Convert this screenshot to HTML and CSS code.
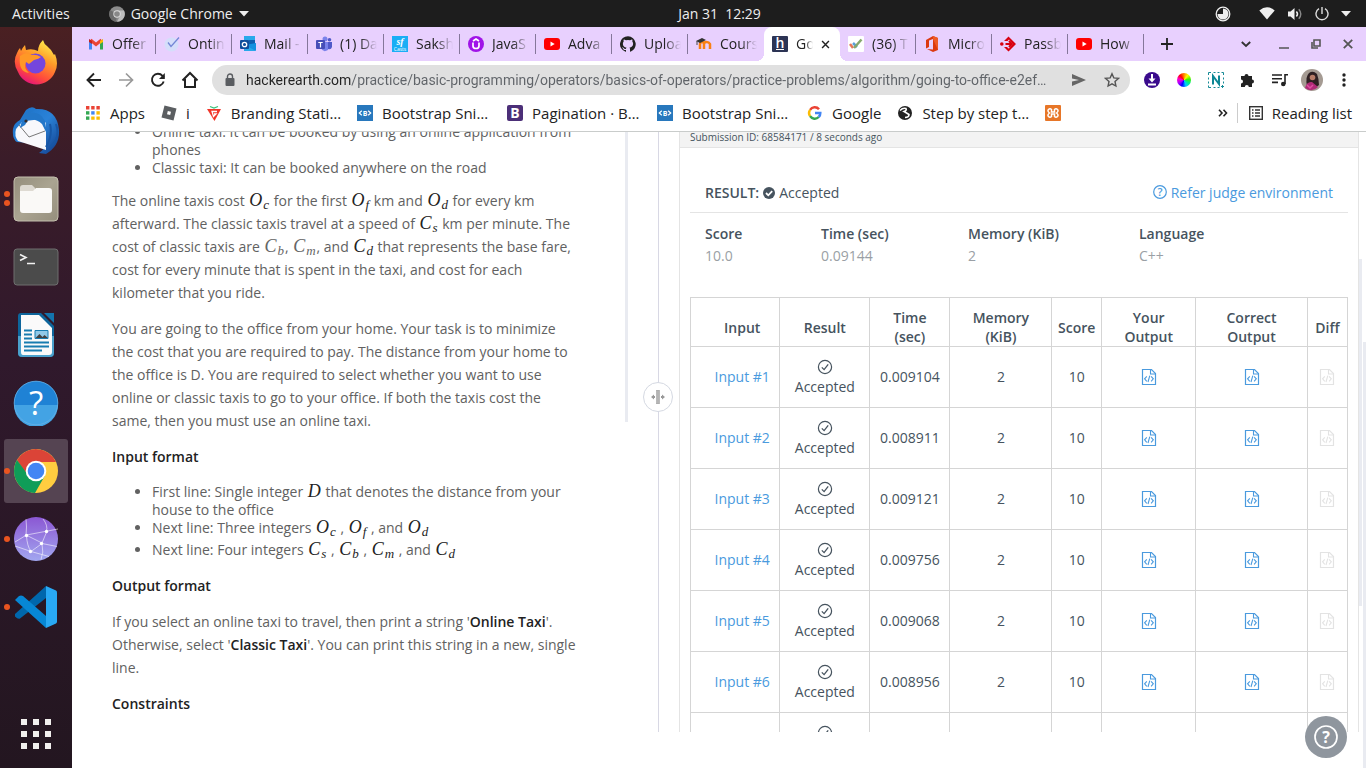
FILE: index.html
```html
<!DOCTYPE html>
<html lang="en">
<head>
<meta charset="utf-8">
<title>Going to office</title>
<link rel="stylesheet" href="styles.css">
</head>
<body>
<svg class="defs" aria-hidden="true">
  <defs>
    <symbol id="check" viewBox="0 0 16 16"><circle cx="8" cy="8" r="6.6" fill="none" stroke="#46535e" stroke-width="1.2"/><path d="M4.8 8.4l2.3 2.2 4.1-5.3" fill="none" stroke="#46535e" stroke-width="1.3"/></symbol>
    <symbol id="code" viewBox="0 0 16 18"><path d="M1.5 1.500h9l4 4v11h-13z" fill="none" stroke="currentColor" stroke-width="1.2"/><path d="M9.500 1.500v4.500h5M5.800 8.400L3.600 10.800l2.200 2.600M10.100 8.400l2.200 2.400-2.200 2.600M8.800 7.600L7 14" fill="none" stroke="currentColor" stroke-width="1.1"/></symbol>
    <symbol id="youtube" viewBox="0 0 16 16"><rect y="2" width="16" height="12" rx="3" fill="#f00"/><path d="M6.500 5.500v5l4.200-2.500z" fill="#fff"/></symbol>
    <symbol id="snipp" viewBox="0 0 16 16"><rect width="16" height="16" fill="#2878bd"/><path d="M4.800 5.800L2.300 8l2.500 2.200M11.200 5.800L13.700 8l-2.500 2.200" fill="none" stroke="#fff" stroke-width="1.200"/><text x="8" y="10.600" text-anchor="middle" font-family="Open Sans" font-size="7" font-weight="700" fill="#fff">B</text></symbol>
    <linearGradient id="ff" x1=".8" y1="0" x2=".3" y2="1"><stop offset="0" stop-color="#fff44f"/><stop offset=".4" stop-color="#ff9a28"/><stop offset=".75" stop-color="#ff4a3c"/><stop offset="1" stop-color="#e21080"/></linearGradient>
    <linearGradient id="tb" x1="0" y1="0" x2="1" y2="1"><stop offset="0" stop-color="#1b6fc4"/><stop offset=".5" stop-color="#2a82d8"/><stop offset="1" stop-color="#123c8a"/></linearGradient>
    <linearGradient id="fl" x1="0" y1="0" x2="1" y2="1"><stop offset="0" stop-color="#958e7d"/><stop offset=".5" stop-color="#aaa491"/><stop offset="1" stop-color="#958e7d"/></linearGradient>
    <linearGradient id="gl" x1="0" y1="0" x2="0" y2="1"><stop offset="0" stop-color="#8b57d3"/><stop offset="1" stop-color="#a2a7f0"/></linearGradient>
  </defs>
</svg>

<header class="topbar">
  <div class="topbar-left">
    <button class="plain">Activities</button>
    <button class="plain app-menu">
      <svg width="16" height="16" viewBox="0 0 16 16"><circle cx="8" cy="8" r="7.8" fill="#8b8b8b"/><path d="M8 8L1.2 4.1A7.8 7.8 0 0 0 7 15.7z" fill="#6c6c6c"/><path d="M8 4.5h7A7.8 7.8 0 0 1 8 15.8L11 10z" fill="#bcbcbc"/><circle cx="8" cy="8" r="3.7" fill="#ddd"/><circle cx="8" cy="8" r="2.8" fill="#888"/></svg>
      <span>Google Chrome</span>
      <svg width="10" height="6" viewBox="0 0 10 6"><path d="M0 0h10L5 5.5z" fill="#eee"/></svg>
    </button>
  </div>
  <time class="clock">Jan 31&nbsp; 12:29</time>
  <div class="tray">
    <svg class="tray-sync" width="16" height="16" viewBox="0 0 16 16"><circle cx="8" cy="8" r="6.8" fill="none" stroke="#eee" stroke-width="1.3"/><path d="M8 8H2.500A5.500 5.500 0 1 0 8 2.500z" fill="#eee"/></svg>
    <svg width="16" height="13" viewBox="0 0 16 13"><path d="M.3 3.4Q8-2.8 15.7 3.4L8 12.5z" fill="#eee"/></svg>
    <svg width="16" height="14" viewBox="0 0 16 14"><path d="M1 4.5h2.6L7.5 1v12L3.6 9.5H1z" fill="#eee"/><path d="M9.4 4.5q2.2 2.5 0 5" fill="none" stroke="#eee" stroke-width="1.5"/><path d="M11.8 2.2q4 4.8 0 9.6" fill="none" stroke="#888" stroke-width="1.4"/></svg>
    <svg width="14" height="14" viewBox="0 0 14 14"><path d="M4 1.6a6 6 0 1 0 6 0M7 0v7" fill="none" stroke="#ddd" stroke-width="1.4"/></svg>
    <svg width="10" height="6" viewBox="0 0 10 6"><path d="M0 0h10L5 5.5z" fill="#eee"/></svg>
  </div>
</header>

<div class="workspace">
  <nav class="dock" aria-label="Dock">
    <button class="dock-item" aria-label="Firefox"><svg width="46" height="46" viewBox="0 0 46 46"><path d="M4 13q1-3 3-5l1 3q2-4 4-6l1 5q6-2 12 1 0-6 5-11 1 4 4 6 5 4 7 9l1-1q4 10 0 18a20 20 0 0 1-37 0Q-1 22 4 13z" fill="url(#ff)"/><circle cx="22.5" cy="23.500" r="10" fill="#7446dd"/><path d="M7 16q6-5 11-1 5-1 10 2-2 2-7 3l-5 4-3-2q-3 6 3 11Q5 32 7 16z" fill="#ff9826"/></svg></button>
    <button class="dock-item" aria-label="Thunderbird"><svg width="48" height="48" viewBox="0 0 48 48"><path d="M14 3q6-5 10-1 21-1 23 21 1 16-13 24l-7-1q6-4 6-9L5 35Q0 32 1 22q1-6 7-9z" fill="url(#tb)"/><path d="M4 22l6-7q9-2 20-3l4 4v27L6 34q-4-5-2-12z" fill="#f8f8fb"/><path d="M7 18l10 12 16-6" fill="none" stroke="#777" stroke-width="1"/><path d="M9 17Q12 4 22 3q-1 2-4 3 10-2 15 8l2 13-5-10q-6-6-14-4l-3 5-5 3z" fill="#2377c9"/><circle cx="14" cy="14" r="1.6" fill="#332a2a"/><path d="M34 40q7-12 4-23m6 0q5 14-6 23" fill="none" stroke="#1756a5" stroke-width="2"/></svg></button>
    <button class="dock-item run-two" aria-label="Files"><svg width="46" height="46" viewBox="0 0 46 46"><rect x="1" y="1" width="44" height="44" rx="4" fill="url(#fl)" stroke="#c4bfae"/><path d="M7 12q0-3 3-3h9l3 3v8H7z" fill="#dedad2"/><path d="M7 15h13l3-3h13q3 0 3 3v19q0 3-3 3H10q-3 0-3-3z" fill="#faf9f7"/></svg></button>
    <button class="dock-item" aria-label="Terminal"><svg width="46" height="38" viewBox="0 0 46 38"><rect x="1" y="1" width="44" height="36" rx="3" fill="#4b4b4b" stroke="#6e6e6e"/><path d="M7 6.500l6 3-6 3M14 15.500h8" fill="none" stroke="#f2f2f2" stroke-width="1.6"/></svg></button>
    <button class="dock-item" aria-label="LibreOffice Writer"><svg width="38" height="46" viewBox="0 0 38 46"><path d="M4 1h20l13 13v27q0 4-4 4H5q-4 0-4-4V4q0-3 3-3z" fill="#0d659b"/><path d="M1 24h36v17q0 4-4 4H5q-4 0-4-4z" fill="#4aa1cc"/><path d="M4 3h18l13 13v24q0 3-3 3H6q-2 0-2-3z" fill="#fafafa"/><path d="M27 1h10v10z" fill="#1374ad"/><path d="M7 18.500h8M7 22.500h8M7 26.500h8M7 30.500h25M7 34.500h25M7 38.500h18" stroke="#177cb0" stroke-width="2"/><path d="M18 18.500h13v8H18z" fill="#91c9e7" stroke="#187cb0"/><path d="M18.500 26l4-4 3 3 2-2 3.500 3z" fill="#424242"/></svg></button>
    <button class="dock-item" aria-label="Help"><svg width="46" height="46" viewBox="0 0 46 46"><circle cx="23" cy="23" r="22" fill="#1f82d5"/><path d="M1 25h44a22 22 0 0 1-44 0z" fill="#43a3e4"/><circle cx="23" cy="23" r="21.800" fill="none" stroke="#66b0e5" stroke-width=".8"/><text x="23" y="35" text-anchor="middle" font-family="Open Sans" font-size="33" fill="#fff">?</text></svg></button>
    <button class="dock-item current run-one" aria-label="Google Chrome"><svg width="46" height="46" viewBox="0 0 46 46"><circle cx="23" cy="23" r="22" fill="#ffcd40"/><path d="M4 12a22 22 0 0 1 39 2H23L14 28z" fill="#db4437"/><path d="M4 12A22 22 0 0 0 22 45l10-17.500-17-.500z" fill="#0f9d58"/><circle cx="23" cy="23" r="10.300" fill="#fff"/><circle cx="23" cy="23" r="8.300" fill="#4285f4"/></svg></button>
    <button class="dock-item run-one" aria-label="Network"><svg width="46" height="46" viewBox="0 0 46 46"><circle cx="23" cy="23" r="22" fill="url(#gl)"/><g fill="none" stroke="#fff" stroke-opacity=".7" stroke-width=".8"><path d="M13 3q1 8 0 16l16 8 5-12M33.500 15.500Q35 9 30 3M2 26l11.500-7L45 13M13.500 19.500Q14 30 18 35.500L29 27.500l15 3M29 27.500q2 9-1 16M2 30l16 5.500 18 5"/></g><g fill="#fff"><circle cx="13.500" cy="19.500" r="1.700"/><circle cx="33.500" cy="15.500" r="1.700"/><circle cx="28.500" cy="27.500" r="1.700"/><circle cx="17.500" cy="35.500" r="1.700"/></g></svg></button>
    <button class="dock-item run-one" aria-label="Visual Studio Code"><svg width="44" height="44" viewBox="0 0 44 44"><path d="M1 29l31-28v12L6 33.500q-2 1-5-2z" fill="#0067ac"/><path d="M1 15l4-4q2-1 4 0l23 20v12z" fill="#0787d5"/><path d="M32 1l10 4.500q1 .500 1 2v29q0 1.500-1 2L32 43z" fill="#29a9f4"/></svg></button>
    <button class="dock-item apps" aria-label="Show applications"><svg width="30" height="30" viewBox="0 0 30 30"><path d="M0 3h30M0 15h30M0 27h30" stroke="#f2f0ee" stroke-width="6" stroke-dasharray="6"/></svg></button>
  </nav>

  <div class="browser">
    <div class="tabs">
      <button class="tab"><svg viewBox="0 0 16 16"><path d="M1 3v10.500h3V7z" fill="#4285f4"/><path d="M12 7v6.500h3V3z" fill="#34a853"/><path d="M2.500 4L8 8.500 13.500 4" fill="none" stroke="#ea4335" stroke-width="3"/><path d="M1 3l3 2v3L1 6z" fill="#c5221f"/><path d="M15 3l-3 2v3l3-2z" fill="#fbbc04"/></svg><span>Offer</span></button>
      <button class="tab"><svg viewBox="0 0 16 16"><circle cx="7.500" cy="8.500" r="7" fill="#d5defa"/><path d="M4 6.500l3 4 8-9" fill="none" stroke="#7387d6" stroke-width="1.300"/></svg><span>Ontin</span></button>
      <button class="tab"><svg viewBox="0 0 16 16"><path d="M4 0h11v15H4z" fill="#28a8ea"/><path d="M9 4h6v5l-6 2z" fill="#0f5fb0"/><path d="M5 9l11 6V7z" fill="#1490df"/><rect y="4" width="9" height="9" rx="1" fill="#0f4f9c"/><circle cx="4.500" cy="8.500" r="2.200" fill="none" stroke="#fff" stroke-width="1.300"/></svg><span>Mail -</span></button>
      <button class="tab"><svg viewBox="0 0 16 16"><circle cx="9" cy="3" r="2.500" fill="#7b83eb"/><circle cx="13.500" cy="3.800" r="1.800" fill="#5059c9"/><path d="M5 6h7v8q-5 3-7-2z" fill="#7b83eb"/><path d="M12 6h4v5q-1 3-4 2z" fill="#5059c9"/><rect y="4" width="9" height="9" rx="1" fill="#464eb8"/><path d="M2.300 6.500h4.400M4.500 6.500v5" stroke="#fff" stroke-width="1.200"/></svg><span>(1) Da</span></button>
      <button class="tab"><svg viewBox="0 0 16 16"><rect width="16" height="16" fill="#1aaef5"/><text x="8" y="9" text-anchor="middle" font-family="Liberation Serif" font-style="italic" font-weight="700" font-size="10" fill="#fff">sf</text><text x="8" y="15" text-anchor="middle" font-family="Open Sans" font-size="5" fill="#fff">Casts</text></svg><span>Saksh</span></button>
      <button class="tab"><svg viewBox="0 0 16 16"><circle cx="8" cy="8" r="8" fill="#a013e8"/><path d="M5 6.500V10q0 2.500 3 2.500t3-2.500V6.500M5 5l3-2 3 2" fill="none" stroke="#fff" stroke-width="1.700"/></svg><span>JavaS</span></button>
      <button class="tab"><svg viewBox="0 0 16 16"><use href="#youtube"/></svg><span>Adva</span></button>
      <button class="tab"><svg viewBox="0 0 16 16"><path d="M8 .200a8 8 0 0 0-2.500 15.600c.400 0 .500-.200.500-.400v-1.500c-2.200.500-2.700-1-2.700-1-.400-.900-.900-1.200-.900-1.200-.700-.500.100-.500.100-.500.800.100 1.200.800 1.200.800.700 1.300 1.900.900 2.300.700.100-.500.300-.900.500-1.100-1.800-.200-3.600-.900-3.600-4 0-.900.300-1.600.800-2.100 0-.200-.400-1 .100-2.100 0 0 .700-.200 2.200.800a7.500 7.500 0 0 1 4 0c1.500-1 2.200-.800 2.200-.800.500 1.100.100 1.900.100 2.100.500.500.800 1.200.800 2.100 0 3.100-1.900 3.800-3.700 4 .300.200.600.700.600 1.500v2.200c0 .200.100.500.500.400A8 8 0 0 0 8 .200z" fill="#222"/></svg><span>Uploa</span></button>
      <button class="tab no-line"><svg viewBox="0 0 16 16"><path d="M4 13V8q0-2 2-2t2 2v5M8 8q0-2 2.500-2T14 8v5" fill="none" stroke="#f98012" stroke-width="2.500"/><path d="M0 5l6-3 4 2-6 3z" fill="#333"/><path d="M1 5v4" stroke="#444"/></svg><span>Cours</span></button>
      <div class="tab active"><svg viewBox="0 0 16 16"><rect width="16" height="16" rx="1" fill="#2c3454"/><text x="8" y="11.500" text-anchor="middle" font-family="Open Sans" font-size="14" font-weight="600" fill="#fff">h</text><path d="M4 13.500h8" stroke="#fff"/></svg><span>Go</span><button class="tab-close" aria-label="Close tab"><svg viewBox="0 0 10 10"><path d="M1.200 1.200l7.600 7.600M8.800 1.200L1.200 8.800" stroke="#222" stroke-width="1.600"/></svg></button></div>
      <button class="tab"><svg viewBox="0 0 16 16"><rect width="16" height="16" rx="1" fill="#fff"/><path d="M2 8l3 4" stroke="#e57658" stroke-width="2.500"/><path d="M5 7l4 4" stroke="#5b9fd8" stroke-width="2.500"/><path d="M6 12l7.500-8.500" stroke="#86a76d" stroke-width="2.500"/></svg><span>(36) T</span></button>
      <button class="tab"><svg viewBox="0 0 16 16"><path d="M2 4l7-4 5 2v12l-5 2-6-3 6 .500V3L5 4.500V11l-3 1.500z" fill="#dc3a10"/><path d="M9 3V0l5 2v12z" fill="#ee5a26"/></svg><span>Micro</span></button>
      <button class="tab"><svg viewBox="0 0 16 16"><circle cx="1.800" cy="8" r="1.800" fill="#d8000f"/><path d="M8.500.500L16 8l-7.500 7.500L4 11h3.500v1L9 12.500 13 8 9 3.500 7.500 5H4z" fill="#d8000f"/><path d="M5.500 8H11M9 5l3 3-3 3" stroke="#d8000f" stroke-width="2" fill="none"/></svg><span>Passb</span></button>
      <button class="tab"><svg viewBox="0 0 16 16"><use href="#youtube"/></svg><span>How</span></button>
      <button class="new-tab" aria-label="New tab"><svg width="12" height="12" viewBox="0 0 12 12"><path d="M6 0v12M0 6h12" stroke="#222" stroke-width="1.800"/></svg></button>
      <div class="window-controls">
        <button aria-label="Search tabs"><svg width="10" height="10" viewBox="0 0 10 10"><path d="M.800 3L5 7l4.200-4" fill="none" stroke="#333" stroke-width="1.900"/></svg></button>
        <button aria-label="Minimize"><svg width="10" height="10" viewBox="0 0 10 10"><path d="M0 9h10" stroke="#555" stroke-width="1.500"/></svg></button>
        <button aria-label="Restore"><svg width="10" height="10" viewBox="0 0 10 10"><path d="M3 1h6v6H3zM1 3v6h6" fill="none" stroke="#555" stroke-width="1.600"/></svg></button>
        <button aria-label="Close"><svg width="10" height="10" viewBox="0 0 10 10"><path d="M.800.800l8.400 8.400M9.200.800L.800 9.200" stroke="#555" stroke-width="1.800"/></svg></button>
      </div>
    </div>

    <div class="toolbar">
      <button class="tool" aria-label="Back"><svg width="16" height="16" viewBox="0 0 16 16"><path d="M15 8H2M8 1.500L1.500 8 8 14.500" fill="none" stroke="#222" stroke-width="1.900"/></svg></button>
      <button class="tool" aria-label="Forward"><svg width="16" height="16" viewBox="0 0 16 16"><path d="M1 8h13M8 1.500L14.500 8 8 14.500" fill="none" stroke="#999" stroke-width="1.700"/></svg></button>
      <button class="tool" aria-label="Reload"><svg width="16" height="16" viewBox="0 0 16 16"><path d="M13.700 9.500a6 6 0 1 1-1.200-5.700L14 5.500" fill="none" stroke="#222" stroke-width="1.900"/><path d="M14.800 1v6H9z" fill="#222"/></svg></button>
      <button class="tool" aria-label="Home"><svg width="18" height="18" viewBox="0 0 18 18"><path d="M1.500 9.500L9 2l7.500 7.500M4 8v8h10V8" fill="none" stroke="#222" stroke-width="2"/></svg></button>
      <div class="omnibox">
        <svg width="10" height="14" viewBox="0 0 10 14"><rect x=".500" y="5" width="9" height="8" rx="1" fill="#5a5d61"/><path d="M2.500 5V3.500a2.500 2.500 0 0 1 5 0V5" fill="none" stroke="#5a5d61" stroke-width="1.400"/></svg>
        <input class="url" aria-label="Address" value="hackerearth.com/practice/basic-programming/operators/basics-of-operators/practice-problems/algorithm/going-to-office-e2ef…">
        <button class="tool" aria-label="Send"><svg width="16" height="14" viewBox="0 0 16 14"><path d="M1 1l14 6-14 6V8.500L8 7 1 5.500z" fill="#666"/></svg></button>
        <button class="tool" aria-label="Bookmark this page"><svg width="16" height="16" viewBox="0 0 16 16"><path d="M8 1.800l1.800 4.100 4.600.500-3.400 3.100.900 4.500L8 11.800 4.100 14l.900-4.500-3.400-3.100 4.600-.500z" fill="none" stroke="#555" stroke-width="1.400"/></svg></button>
      </div>
      <button class="tool" aria-label="Downloader"><svg width="16" height="16" viewBox="0 0 16 16"><circle cx="8" cy="8" r="8" fill="#3a0b8c"/><path d="M8 2v7M4 12.500h8" stroke="#fff" stroke-width="2"/><path d="M4.500 6.500h7L8 10.500z" fill="#fff"/></svg></button>
      <button class="tool" aria-label="Color picker"><span class="wheel"></span></button>
      <button class="tool" aria-label="Capture"><svg width="16" height="16" viewBox="0 0 16 16"><path d="M.500 3V.500H3M5.500.500h2M9.500.500h2M13.500.500h2V3M.500 5.500v2M.500 9.500v2M15.500 5.500v2M15.500 9.500v2M.500 13.500v2H3M5.500 15.500h2M9.500 15.500h2M13 14.500h3M14.500 13v3" fill="none" stroke="#168a96" stroke-width="1"/><path d="M5 12.500V4l6 8V3.500" fill="none" stroke="#0d8794" stroke-width="2"/></svg></button>
      <button class="tool" aria-label="Extensions"><svg width="16" height="16" viewBox="0 0 16 16"><path d="M1 4h3.500a2 2 0 1 1 4 0H12v3.500a2 2 0 1 1 0 4V15H8.800a2 2 0 0 0-4 0H1v-3.500a2 2 0 0 0 0-4z" fill="#222"/></svg></button>
      <button class="tool" aria-label="Media"><svg width="16" height="14" viewBox="0 0 16 14"><path d="M0 2h10M0 5.700h10M0 9.400h6M13 1v10M12.500 1.800H16" fill="none" stroke="#222" stroke-width="1.600"/><circle cx="11.300" cy="11" r="2.300" fill="#222"/></svg></button>
      <button class="tool" aria-label="Profile"><svg width="22" height="22" viewBox="0 0 22 22"><circle cx="11" cy="11" r="11" fill="#a59b93"/><path d="M6 17Q4 8 8 4q4-3 8 1 2 5 2 11l-4 3z" fill="#2e2023"/><path d="M4 19q2-7 7-6l6 5q-6 6-13 1z" fill="#b02b78"/><circle cx="11.500" cy="8.500" r="2.800" fill="#b77c68"/><path d="M6 16l3 3 3-3" fill="none" stroke="#e04fa2" stroke-width="1.500"/></svg></button>
      <button class="tool" aria-label="Menu"><svg width="4" height="14" viewBox="0 0 4 14"><g fill="#222"><circle cx="2" cy="2" r="1.700"/><circle cx="2" cy="7" r="1.700"/><circle cx="2" cy="12" r="1.700"/></g></svg></button>
    </div>

    <nav class="bookmarks" aria-label="Bookmarks">
      <a href="#apps"><svg viewBox="0 0 16 16"><g stroke-width="3.400" stroke-dasharray="3.400 1.800"><path d="M1 2.700h14" stroke="#ea4335"/><path d="M1 7.900h3.400" stroke="#34a853"/><path d="M6.200 7.900h3.400" stroke="#4285f4"/><path d="M11.400 7.900h3.400" stroke="#fbbc04"/><path d="M1 13.100h3.400" stroke="#34a853"/><path d="M6.200 13.100h8.800" stroke="#fbbc04"/></g></svg><span>Apps</span></a>
      <a href="#i"><svg viewBox="0 0 16 16"><path d="M3.500.500l12 3-3 12-12-3z" fill="#5b5e61"/><path d="M6.800 6l3.200.800-.800 3.200L6 9.200z" fill="#fff"/></svg><span>i</span></a>
      <a class="wide" href="#branding"><svg viewBox="0 0 16 16"><path d="M1 4h14l-6.500 12z" fill="#f0362a"/><path d="M11 6.500H6l1.500 5L10 9H8" fill="none" stroke="#fff" stroke-width="1.300"/><path d="M4 1.500L8 3l4-1.500" stroke="#39c27a" stroke-width="1.300" fill="none"/></svg><span>Branding Stati…</span></a>
      <a class="wide" href="#b1"><svg viewBox="0 0 16 16"><use href="#snipp"/></svg><span>Bootstrap Sni…</span></a>
      <a class="wide" href="#pagination"><svg viewBox="0 0 16 16"><rect width="16" height="16" rx="2" fill="#4c2f78"/><text x="8" y="13" text-anchor="middle" font-family="Open Sans" font-size="14" font-weight="700" fill="#fff">B</text></svg><span>Pagination · B…</span></a>
      <a class="wide" href="#b2"><svg viewBox="0 0 16 16"><use href="#snipp"/></svg><span>Bootstrap Sni…</span></a>
      <a href="#google"><svg viewBox="0 0 16 16"><g fill="none" stroke-width="2.500"><path d="M3.100 4.900A5.500 5.500 0 0 1 12 4.200" stroke="#ea4335"/><path d="M3.100 4.900a5.500 5.500 0 0 0 0 6.200" stroke="#fbbc04"/><path d="M3.100 11.100a5.500 5.500 0 0 0 8.600.900" stroke="#34a853"/><path d="M11.700 12a5.500 5.500 0 0 0 1.600-4H8" stroke="#4285f4"/></g></svg><span>Google</span></a>
      <a href="#step"><svg viewBox="0 0 16 16"><circle cx="8" cy="8" r="7" fill="#222"/><path d="M3 5.500q3-3 6-2 1 2-2 3l5 3q0 3-4 3" fill="none" stroke="#fff" stroke-width="1.600"/></svg><span>Step by step t…</span></a>
      <a href="#xampp" aria-label="XAMPP"><svg viewBox="0 0 16 16"><rect width="16" height="16" rx="1" fill="#e77628"/><path d="M3.500 4.500Q5 3 6.500 4.500V7h3V4.500Q11 3 12.500 4.500T11.500 8q2.500 2 1 3.500t-3 0V9h-3v2.500q-1.500 1.500-3 0t1-3.500q-2.500-2-1-3.500z" fill="none" stroke="#fff" stroke-width="1.500"/></svg></a>
      <button class="overflow" aria-label="More bookmarks"><svg width="10" height="8" viewBox="0 0 10 8"><path d="M1 .800L4 4 1 7.200M5.500.800l3 3.200-3 3.200" fill="none" stroke="#222" stroke-width="1.600"/></svg></button>
      <button class="reading"><svg width="14" height="14" viewBox="0 0 14 14"><rect x=".700" y=".700" width="12.600" height="12.600" fill="none" stroke="#333" stroke-width="1.400"/><path d="M3 4h1.500M3 7h1.500M3 10h1.500M6 4h5M6 7h5M6 10h5" stroke="#333" stroke-width="1.400"/></svg><span>Reading list</span></button>
    </nav>

    <main class="page">
      <div class="split">
        <article class="problem">
          <ul class="lead">
            <li>Online taxi: It can be booked by using an online application from phones</li>
            <li>Classic taxi: It can be booked anywhere on the road</li>
          </ul>
          <p>The online taxis cost <i>O<sub>c</sub></i> for the first <i>O<sub>f</sub></i> km and <i>O<sub>d</sub></i> for every km afterward. The classic taxis travel at a speed of <i>C<sub>s</sub></i> km per minute. The cost of classic taxis are <i class="light">C<sub>b</sub></i>, <i class="light">C<sub>m</sub></i>, and <i>C<sub>d</sub></i> that represents the base fare, cost for every minute that is spent in the taxi, and cost for each kilometer that you ride.</p>
          <p>You are going to the office from your home. Your task is to minimize the cost that you are required to pay. The distance from your home to the office is D. You are required to select whether you want to use online or classic taxis to go to your office. If both the taxis cost the same, then you must use an online taxi.</p>
          <h2>Input format</h2>
          <ul>
            <li>First line: Single integer <i>D</i> that denotes the distance from your house to the office</li>
            <li class="math-line">Next line: Three integers <i>O<sub>c</sub></i> , <i>O<sub>f</sub></i> , and <i>O<sub>d</sub></i></li>
            <li class="math-line">Next line: Four integers <i>C<sub>s</sub></i> , <i>C<sub>b</sub></i> , <i>C<sub>m</sub></i> , and <i>C<sub>d</sub></i></li>
          </ul>
          <h2>Output format</h2>
          <p>If you select an online taxi to travel, then print a string '<b>Online Taxi</b>'. Otherwise, select '<b>Classic Taxi</b>'. You can print this string in a new, single line.</p>
          <h2>Constraints</h2>
          <div class="scroll scroll-left"></div>
        </article>

        <div class="divider"><button class="handle" aria-label="Resize panels"><svg width="14" height="14" viewBox="0 0 14 14"><rect x="5.500" width="3" height="14" fill="#b5b5b5" stroke="#999" stroke-width=".500"/><path d="M0 7l3-2.500V6h1v2H3v1.500zM14 7l-3-2.500V6h-1v2h1v1.500z" fill="#999"/></svg></button></div>

        <section class="result">
          <div class="submission">Submission ID: 68584171 / 8 seconds ago</div>
          <div class="result-body">
            <div class="verdict">
              <b>RESULT:</b>
              <svg width="12" height="12" viewBox="0 0 12 12"><circle cx="6" cy="6" r="6" fill="#46535e"/><path d="M3 6l2.300 2.300L9.200 4.200" fill="none" stroke="#fff" stroke-width="1.800"/></svg>
              <span>Accepted</span>
              <a class="judge" href="#judge"><svg width="14" height="14" viewBox="0 0 14 14"><circle cx="7" cy="7" r="6.300" fill="none" stroke="#4a9ade" stroke-width="1.200"/><text x="7" y="11" text-anchor="middle" font-family="Open Sans" font-size="11" font-weight="600" fill="#4a9ade">?</text></svg>Refer judge environment</a>
            </div>
            <dl class="stats">
              <div><dt>Score</dt><dd>10.0</dd></div>
              <div><dt>Time (sec)</dt><dd>0.09144</dd></div>
              <div><dt>Memory (KiB)</dt><dd>2</dd></div>
              <div><dt>Language</dt><dd>C++</dd></div>
            </dl>
            <table class="cases">
              <colgroup><col class="c-input"><col class="c-result"><col class="c-time"><col class="c-memory"><col class="c-score"><col class="c-yours"><col class="c-correct"><col class="c-diff"></colgroup>
              <thead><tr><th>Input</th><th>Result</th><th>Time<br>(sec)</th><th>Memory<br>(KiB)</th><th>Score</th><th>Your<br>Output</th><th>Correct<br>Output</th><th>Diff</th></tr></thead>
              <tbody>
                <tr><td><a href="#1">Input #1</a></td><td><svg class="ok"><use href="#check"/></svg>Accepted</td><td>0.009104</td><td>2</td><td>10</td><td><a href="#y1" aria-label="Your output"><svg class="doc"><use href="#code"/></svg></a></td><td><a href="#c1" aria-label="Correct output"><svg class="doc"><use href="#code"/></svg></a></td><td><svg class="doc off"><use href="#code"/></svg></td></tr>
                <tr><td><a href="#2">Input #2</a></td><td><svg class="ok"><use href="#check"/></svg>Accepted</td><td>0.008911</td><td>2</td><td>10</td><td><a href="#y2" aria-label="Your output"><svg class="doc"><use href="#code"/></svg></a></td><td><a href="#c2" aria-label="Correct output"><svg class="doc"><use href="#code"/></svg></a></td><td><svg class="doc off"><use href="#code"/></svg></td></tr>
                <tr><td><a href="#3">Input #3</a></td><td><svg class="ok"><use href="#check"/></svg>Accepted</td><td>0.009121</td><td>2</td><td>10</td><td><a href="#y3" aria-label="Your output"><svg class="doc"><use href="#code"/></svg></a></td><td><a href="#c3" aria-label="Correct output"><svg class="doc"><use href="#code"/></svg></a></td><td><svg class="doc off"><use href="#code"/></svg></td></tr>
                <tr><td><a href="#4">Input #4</a></td><td><svg class="ok"><use href="#check"/></svg>Accepted</td><td>0.009756</td><td>2</td><td>10</td><td><a href="#y4" aria-label="Your output"><svg class="doc"><use href="#code"/></svg></a></td><td><a href="#c4" aria-label="Correct output"><svg class="doc"><use href="#code"/></svg></a></td><td><svg class="doc off"><use href="#code"/></svg></td></tr>
                <tr><td><a href="#5">Input #5</a></td><td><svg class="ok"><use href="#check"/></svg>Accepted</td><td>0.009068</td><td>2</td><td>10</td><td><a href="#y5" aria-label="Your output"><svg class="doc"><use href="#code"/></svg></a></td><td><a href="#c5" aria-label="Correct output"><svg class="doc"><use href="#code"/></svg></a></td><td><svg class="doc off"><use href="#code"/></svg></td></tr>
                <tr><td><a href="#6">Input #6</a></td><td><svg class="ok"><use href="#check"/></svg>Accepted</td><td>0.008956</td><td>2</td><td>10</td><td><a href="#y6" aria-label="Your output"><svg class="doc"><use href="#code"/></svg></a></td><td><a href="#c6" aria-label="Correct output"><svg class="doc"><use href="#code"/></svg></a></td><td><svg class="doc off"><use href="#code"/></svg></td></tr>
                <tr class="last"><td></td><td><svg class="ok"><use href="#check"/></svg></td><td></td><td></td><td></td><td></td><td></td><td></td></tr>
              </tbody>
            </table>
          </div>
        </section>
        <div class="scroll scroll-panel"></div>
      </div>
      <div class="scroll scroll-page"></div>
      <button class="help" aria-label="Help"><svg width="24" height="24" viewBox="0 0 24 24"><circle cx="12" cy="12" r="11" fill="none" stroke="#fff" stroke-width="1.700"/><text x="12" y="17.500" text-anchor="middle" font-family="Open Sans" font-size="16" font-weight="700" fill="#fff">?</text></svg></button>
    </main>
  </div>
</div>
</body>
</html>
```

FILE: styles.css
```css
* { box-sizing: border-box; }

body {
  margin: 0;
  height: 100vh;
  display: flex;
  flex-direction: column;
  overflow: hidden;
  background: #fff;
  font: 14px/20px "Open Sans", "Noto Sans", sans-serif;
  color: #222;
}

button {
  margin: 0;
  padding: 0;
  border: 0;
  background: none;
  font: inherit;
  color: inherit;
}

a { text-decoration: none; color: inherit; }
svg { flex: none; }
.defs { position: absolute; width: 0; height: 0; }

/* System bar */
.topbar {
  flex: none;
  height: 27px;
  padding: 0 15px 0 12px;
  display: grid;
  grid-template-columns: 1fr auto 1fr;
  align-items: center;
  background: #1d1d1d;
  color: #eee;
}
.topbar-left { display: flex; gap: 39px; }
.app-menu { display: flex; align-items: center; gap: 6px; }
.clock { padding-left: 76px; }
.tray { display: flex; justify-content: flex-end; align-items: center; gap: 12px; }
.tray-sync { margin-right: 16px; }

.workspace { flex: 1; min-height: 0; display: flex; }

/* Dock */
.dock {
  flex: none;
  width: 72px;
  padding: 4px 4px 2px;
  display: flex;
  flex-direction: column;
  gap: 4px;
  background: linear-gradient(#4a2022, #3a1c29 18%, #30192c 45%, #231620);
}
.dock-item {
  position: relative;
  height: 64px;
  display: flex;
  align-items: center;
  justify-content: center;
  border-radius: 3px;
}
.dock-item.current { background: #554452; }
.dock-item.apps { margin-top: auto; }
.run-one::before,
.run-two::before {
  content: "";
  position: absolute;
  left: 0;
  width: 6px;
  height: 6px;
  border-radius: 50%;
  background: #e95420;
}
.run-two::before { top: 24px; box-shadow: 0 9px #e95420; }

/* Browser */
.browser { flex: 1; min-width: 0; display: flex; flex-direction: column; }

.tabs {
  flex: none;
  height: 34px;
  padding-left: 8px;
  display: flex;
  align-items: center;
  background: #e8d0fe;
}
.tab {
  flex: none;
  position: relative;
  width: 76px;
  height: 34px;
  padding-left: 8px;
  display: flex;
  align-items: center;
  gap: 8px;
  text-align: left;
}
.tab > svg { width: 16px; height: 16px; }
.tab > span {
  width: 37px;
  overflow: hidden;
  white-space: nowrap;
  -webkit-mask-image: linear-gradient(to right, #000 55%, transparent);
  mask-image: linear-gradient(to right, #000 55%, transparent);
}
.tab::after {
  content: "";
  position: absolute;
  right: 0;
  top: 7px;
  width: 1px;
  height: 20px;
  background: #85779a;
}
.tab.no-line::after { display: none; }
.tab.active { background: #fff; border-radius: 8px 8px 0 0; }
.tab.active > span { width: 17px; }
.tab.active::before,
.tab.active::after {
  content: "";
  position: absolute;
  top: auto;
  bottom: 0;
  width: 8px;
  height: 8px;
  background: radial-gradient(circle at 0 0, transparent 8px, #fff 8px);
}
.tab.active::before { left: -8px; }
.tab.active::after { right: -8px; transform: scaleX(-1); }
.tab-close { display: flex; }
.tab-close svg { width: 9px; height: 9px; }
.new-tab { display: flex; margin-left: 17px; }
.window-controls { margin-left: auto; padding-right: 13px; display: flex; gap: 22px; }
.window-controls button { display: flex; }
.window-controls button:first-child { margin-right: 6px; }

.toolbar { flex: none; height: 38px; padding: 0 6px; display: flex; align-items: center; }
.tool { flex: none; width: 32px; display: flex; align-items: center; justify-content: center; }
.omnibox {
  flex: 1;
  min-width: 0;
  height: 30px;
  margin: 0 6px;
  padding: 0 2px 0 13px;
  display: flex;
  align-items: center;
  gap: 1px;
  border-radius: 15px;
  background: #e0e0e0;
}
.url {
  flex: 1;
  min-width: 0;
  margin-left: 10px;
  padding: 0;
  border: 0;
  outline: 0;
  font: 14px/20px Roboto, "Open Sans", sans-serif;
  background: linear-gradient(to right, #222 105px, #5f6368 105px);
  -webkit-background-clip: text;
  background-clip: text;
  -webkit-text-fill-color: transparent;
}
.wheel {
  width: 14px;
  height: 14px;
  border-radius: 50%;
  background: conic-gradient(#f80, #ff0, #4e0, #0e8, #0cf, #00f, #a0f, #f0c, #f00, #f80);
}

.bookmarks {
  flex: none;
  height: 32px;
  padding: 0 14px 4px 13px;
  display: flex;
  align-items: center;
  font-size: 15px;
  white-space: nowrap;
}
.bookmarks a { display: flex; align-items: center; gap: 9px; margin-right: 16px; }
.bookmarks a.wide { min-width: 134px; }
.bookmarks a svg { width: 16px; height: 16px; }
.overflow { display: flex; margin-left: auto; }
.reading { display: flex; align-items: center; gap: 9px; margin-left: 9px; padding-left: 11px; border-left: 1px solid #ccc; }

/* Page */
.page { position: relative; flex: 1; min-height: 0; padding-bottom: 36px; border-top: 1px solid #c9cccb; }
.split {
  position: relative;
  height: 100%;
  display: grid;
  grid-template-columns: 586fr 21px 687fr;
  overflow: hidden;
}
.problem {
  position: relative;
  padding: 0 79px 0 40px;
  color: #616161;
  overflow: hidden;
}
.problem ul { margin: 15px 0 11px; padding-left: 40px; line-height: 18px; }
.problem ul.lead { margin: -9px 0 12px; }
.problem p,
.problem h2 { margin: 0 0 13px; line-height: 23px; }
.problem h2,
.problem b { font-size: 14px; font-weight: 600; color: #222; }
.problem i { margin: 0 1px; font: italic 18px/0 "Liberation Serif", serif; color: #222; }
.problem i.light { color: #666; }
.problem sub { margin-left: 1px; font-size: 13px; line-height: 0; vertical-align: -3px; }
.problem .math-line { padding-bottom: 4px; }

.divider { position: relative; border-left: 1px solid #d8d8e4; }
.handle {
  position: absolute;
  left: -16px;
  top: 250px;
  width: 30px;
  height: 30px;
  display: flex;
  align-items: center;
  justify-content: center;
  border: 1px solid #d5d9e2;
  border-radius: 50%;
  background: #fff;
}

.result { margin-right: 7px; border: solid #e4e4e4; border-width: 0 1px; color: #46535e; overflow: hidden; }
.submission {
  height: 16px;
  padding-left: 10px;
  border-bottom: 1px solid #e4e4e4;
  background: #f3f3f3;
  font-size: 10px;
  line-height: 11px;
}
.result-body { padding: 26px 10px 0; }
.result b, .result dt, .result th { font-weight: 600; }
.verdict { height: 39px; padding: 9px 15px 0; display: flex; align-items: flex-start; gap: 4px; border-bottom: 1px solid #e4e4e4; }
.verdict svg { margin-top: 4px; }
.judge { margin-left: auto; display: flex; gap: 4px; }
.judge svg { margin-top: 2px; }
.result a { color: #4a9ade; }
.stats { margin: 0; padding: 10px 15px 0; height: 84px; display: grid; grid-template-columns: 116fr 147fr 171fr 194fr; line-height: 22px; }
.stats dd { margin: 0; color: #9a9fa5; }
.cases { width: 100%; table-layout: fixed; border-collapse: collapse; }
.cases th, .cases td { border: 1px solid #d5d5d5; text-align: center; }
.cases th { padding: 10px 0 0; line-height: 19px; }
.cases td { height: 61px; padding: 10px 0; }
.cases th:first-child, .cases td:first-child { padding-left: 14px; }
.c-input { width: 13.6%; }
.c-result { width: 13.7%; }
.c-time { width: 12.2%; }
.c-memory { width: 15.5%; }
.c-score { width: 7.6%; }
.c-yours { width: 14.3%; }
.c-correct { width: 17%; }
.c-diff { width: 6.1%; }
.ok { display: block; width: 16px; height: 16px; margin: 2px auto; }
.doc { display: block; width: 16px; height: 18px; margin: 0 auto; }
.doc.off { color: #e3e3e3; }
.cases .last td { vertical-align: top; }

.scroll { position: absolute; width: 3px; background: #e9ebf1; }
.scroll-left { right: 30px; top: 0; height: 290px; }
.scroll-panel { right: 4px; top: 127px; height: 347px; }
.scroll-page { right: 0; top: 210px; bottom: 0; }
.help {
  position: absolute;
  right: 19px;
  bottom: 10px;
  width: 42px;
  height: 42px;
  display: flex;
  align-items: center;
  justify-content: center;
  border-radius: 50%;
  background: #8f969e;
}
```
